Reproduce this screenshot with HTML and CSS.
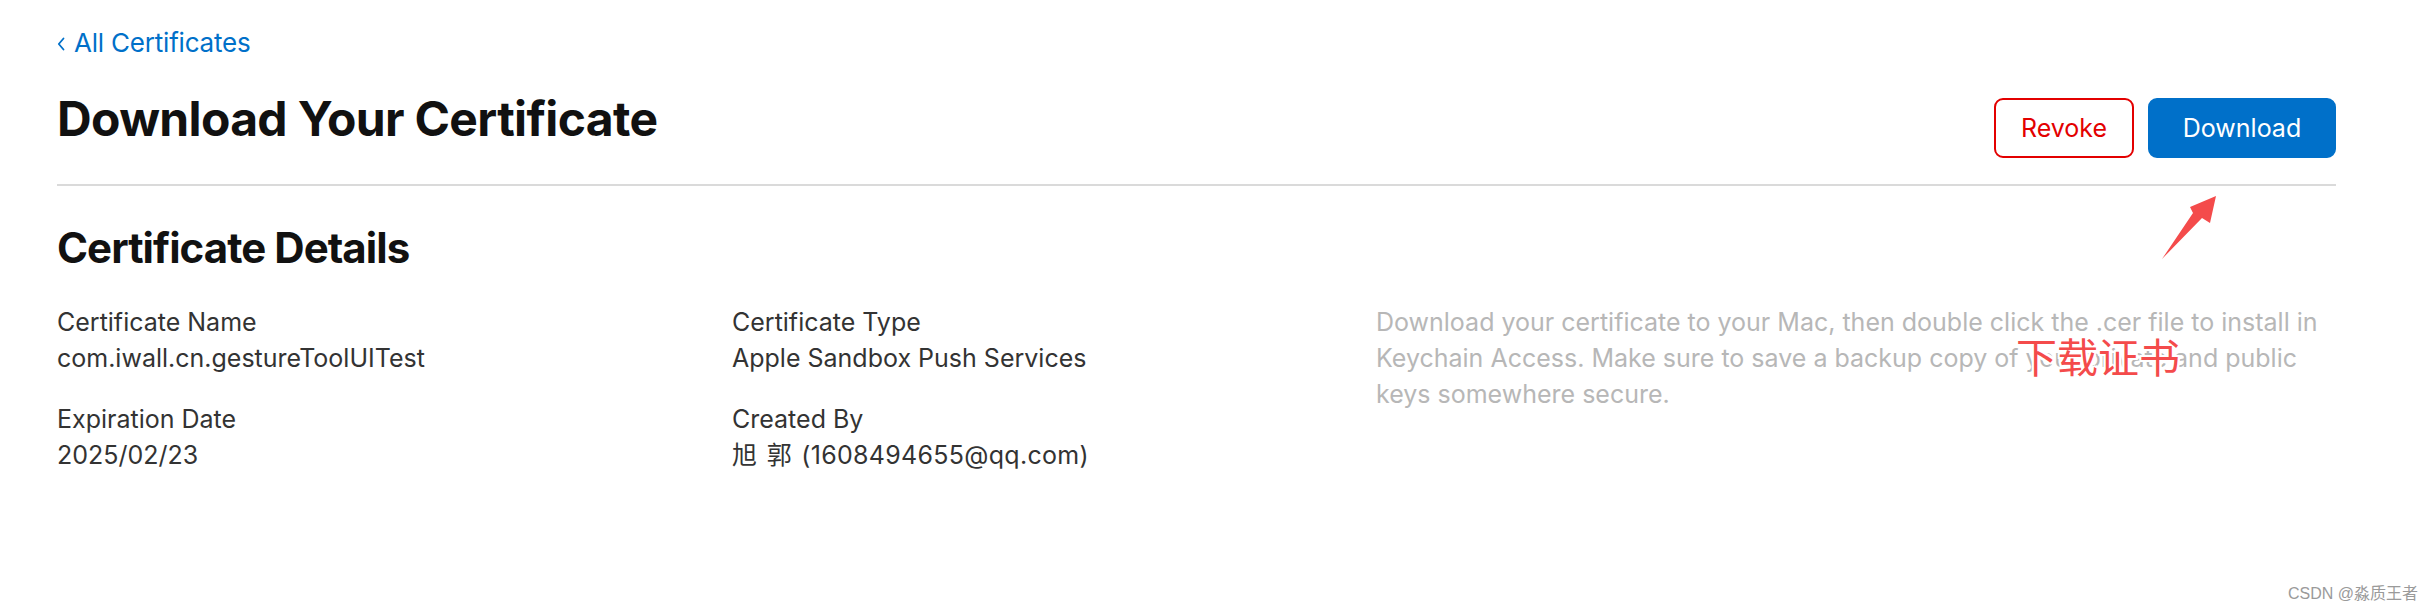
FILE: index.html
```html
<!DOCTYPE html>
<html lang="en">
<head>
<meta charset="utf-8">
<title>Download Your Certificate</title>
<link rel="stylesheet" href="styles.css">
</head>
<body>
<main class="page">
  <a class="back-link" href="#">
    <svg class="chevron" width="8" height="14" viewBox="0 0 8 14" aria-hidden="true"><path d="M6.5 1.5 L1.8 7 L6.5 12.5" fill="none" stroke="#0070c9" stroke-width="1.8" stroke-linecap="round" stroke-linejoin="round"/></svg>
    <span>All Certificates</span>
  </a>

  <header class="page-header">
    <h1 class="page-title">Download Your Certificate</h1>
    <div class="actions">
      <button class="btn btn-revoke" type="button">Revoke</button>
      <button class="btn btn-download" type="button">Download</button>
    </div>
  </header>

  <hr class="divider">

  <section class="details">
    <h2 class="section-title">Certificate Details</h2>
    <div class="details-grid">
      <div class="column">
        <dl class="field">
          <dt>Certificate Name</dt>
          <dd>com.iwall.cn.gestureToolUITest</dd>
        </dl>
        <dl class="field">
          <dt>Expiration Date</dt>
          <dd>2025/02/23</dd>
        </dl>
      </div>
      <div class="column">
        <dl class="field">
          <dt>Certificate Type</dt>
          <dd>Apple Sandbox Push Services</dd>
        </dl>
        <dl class="field">
          <dt>Created By</dt>
          <dd class="creator">旭 郭 (1608494655@qq.com)</dd>
        </dl>
      </div>
      <p class="description">Download your certificate to your Mac, then double click the .cer file to install in Keychain Access. Make sure to save a backup copy of your private and public keys somewhere secure.</p>
    </div>
  </section>
</main>

<svg class="annotation-arrow" width="80" height="80" viewBox="0 0 80 80" aria-hidden="true">
  <polygon points="12,69 43,23 40,17 66,6 60,33 52,28" fill="#f44b4b"/>
</svg>
<div class="annotation-text">下载证书</div>
<div class="watermark">CSDN @淼质王者</div>
</body>
</html>
```

FILE: styles.css
```css
* {
  box-sizing: border-box;
}

html, body {
  margin: 0;
  padding: 0;
  background: #ffffff;
}

body {
  font-family: Inter, "Noto Sans", "Noto Sans CJK SC", sans-serif;
  color: #333333;
  width: 2432px;
  height: 612px;
  overflow: hidden;
  position: relative;
}

.page {
  padding: 25px 96px 0 57px;
}

.back-link {
  display: inline-flex;
  align-items: center;
  gap: 9px;
  font-size: 26px;
  line-height: 36px;
  color: #0070c9;
  text-decoration: none;
  letter-spacing: -0.2px;
}

.chevron {
  margin-top: 2px;
}

.page-header {
  margin-top: 29px;
  display: flex;
  justify-content: space-between;
  align-items: flex-start;
}

.page-title {
  margin: 0;
  font-size: 48px;
  line-height: 58px;
  font-weight: 700;
  color: #111111;
  letter-spacing: -0.65px;
}

.actions {
  margin-top: 8px;
  display: flex;
  gap: 14px;
}

.btn {
  height: 60px;
  border-radius: 9px;
  font-family: Inter, "Noto Sans", sans-serif;
  font-size: 25px;
  line-height: 1;
  cursor: pointer;
  display: flex;
  align-items: center;
  justify-content: center;
}

.btn-revoke {
  width: 140px;
  background: #ffffff;
  color: #e30000;
  border: 2px solid #e30000;
}

.btn-download {
  width: 188px;
  background: #0070c9;
  color: #ffffff;
  border: 2px solid #0070c9;
}

.divider {
  margin: 26px 0 0 0;
  border: 0;
  height: 2px;
  background: #dadada;
}

.section-title {
  margin: 36px 0 0 0;
  font-size: 42px;
  line-height: 52px;
  font-weight: 700;
  color: #111111;
  letter-spacing: -0.95px;
}

.details-grid {
  margin-top: 30px;
  display: grid;
  grid-template-columns: 675px 644px 1fr;
}

.column {
  display: flex;
  flex-direction: column;
  gap: 25px;
}

.field {
  margin: 0;
  font-size: 25px;
  line-height: 36px;
}

.field dt {
  color: #333333;
}

.field dd {
  margin: 0;
  color: #333333;
}

.field .creator {
  word-spacing: 2px;
  letter-spacing: 0.3px;
}

.description {
  margin: 0;
  font-size: 25px;
  line-height: 36px;
  color: #b7b7b7;
  max-width: 960px;
}

.annotation-arrow {
  position: absolute;
  left: 2150px;
  top: 190px;
}

.annotation-text {
  position: absolute;
  left: 2016px;
  top: 333px;
  font-family: "Noto Sans CJK SC", sans-serif;
  font-size: 41px;
  line-height: 44px;
  color: #f44b4b;
  text-shadow: 2px 0 0 #fff, -2px 0 0 #fff, 0 2px 0 #fff, 0 -2px 0 #fff, 2px 2px 0 #fff, -2px -2px 0 #fff, 2px -2px 0 #fff, -2px 2px 0 #fff;
}

.watermark {
  position: absolute;
  right: 14px;
  bottom: 8px;
  font-family: "Liberation Sans", "Noto Sans CJK SC", sans-serif;
  font-size: 16px;
  line-height: 20px;
  color: #9a9a9a;
}
```
